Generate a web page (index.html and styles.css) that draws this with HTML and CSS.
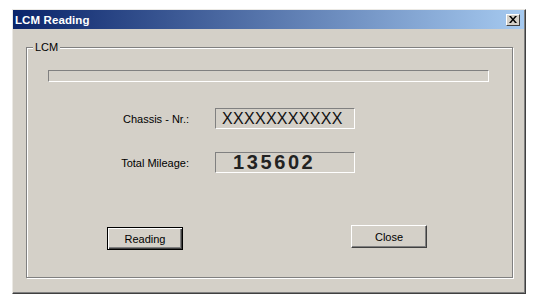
FILE: index.html
```html
<!DOCTYPE html>
<html>
<head>
<meta charset="utf-8">
<link rel="stylesheet" href="styles.css">
</head>
<body>
<div class="window">
  <div class="titlebar">
    <span class="title">LCM Reading</span>
    <span class="close-btn"><svg width="8" height="7" viewBox="0 0 8 7"><path d="M0 0h2l2 2.5 2-2.5h2l-3 3.5 3 3.5h-2l-2-2.5-2 2.5h-2l3-3.5z" fill="#000"/></svg></span>
  </div>
  <div class="content">
    <div class="groupbox">
      <span class="legend">LCM</span>
      <div class="progress"></div>
      <div class="row row-first">
        <span class="label">Chassis - Nr.:</span>
        <div class="field field-chassis">XXXXXXXXXXX</div>
      </div>
      <div class="row row-second">
        <span class="label">Total Mileage:</span>
        <div class="field field-mileage">135602</div>
      </div>
      <div class="buttons">
        <button class="btn btn-default">Reading</button>
        <button class="btn btn-close">Close</button>
      </div>
    </div>
  </div>
</div>
</body>
</html>
```
FILE: styles.css
```css
html, body {
  margin: 0;
  padding: 0;
  background: #ffffff;
}
body {
  padding: 9px 0 0 12px;
  font-family: "Liberation Sans", Arial, sans-serif;
  font-size: 11px;
  color: #000;
}
.window {
  width: 511px;
  height: 282px;
  background: #d4d0c8;
  border-left: 1px solid #ebe9e4;
  border-top: 1px solid #ebe9e4;
  border-right: 1px solid #404040;
  border-bottom: 1px solid #404040;
  padding: 0 1px 1px 0;
  box-shadow: inset -1px -1px 0 #808080;
  display: flex;
  flex-direction: column;
}
.titlebar {
  height: 19px;
  background: linear-gradient(to right, #0a246a, #a6caf0);
  display: flex;
  align-items: center;
  justify-content: space-between;
  padding: 0 4px 0 2px;
}
.title {
  color: #fff;
  font-weight: bold;
  font-size: 11.5px;
  letter-spacing: 0.1px;
}
.close-btn {
  width: 12px;
  height: 10px;
  background: #d4d0c8;
  border-left: 1px solid #fff;
  border-top: 1px solid #fff;
  border-right: 1px solid #404040;
  border-bottom: 1px solid #404040;
  display: flex;
  align-items: center;
  justify-content: center;
}
.content {
  flex: 1;
  padding: 18px 0 0 13px;
}
.groupbox {
  position: relative;
  border: 1px solid #808080;
  box-shadow: inset 1px 1px 0 #fff, 1px 1px 0 #fff;
  padding: 0 23px 0 21px;
  box-sizing: border-box;
  height: 231px;
  width: 487px;
}
.legend {
  position: absolute;
  top: -7px;
  left: 6px;
  padding: 0 2px;
  background: #d4d0c8;
  line-height: 13px;
}
.progress {
  margin-top: 22px;
  height: 10px;
  border-top: 1px solid #808080;
  border-left: 1px solid #808080;
  border-bottom: 1px solid #fff;
  border-right: 1px solid #fff;
}
.row {
  display: flex;
  align-items: center;
  gap: 26px;
}
.row-first {
  margin-top: 26px;
}
.row-second {
  margin-top: 23px;
}
.label {
  width: 141px;
  text-align: right;
}
.field {
  width: 138px;
  height: 19px;
  border-top: 1px solid #808080;
  border-left: 1px solid #808080;
  border-bottom: 1px solid #fff;
  border-right: 1px solid #fff;
  display: flex;
  align-items: center;
}
.field-chassis {
  font-size: 16px;
  letter-spacing: 0.3px;
  padding-left: 6px;
  width: 132px;
  color: #111;
}
.field-mileage {
  font-size: 20px;
  font-weight: bold;
  letter-spacing: 2.6px;
  padding-left: 17px;
  width: 121px;
  color: #222;
}
.buttons {
  display: flex;
  align-items: flex-start;
  margin-top: 52px;
  padding-left: 59px;
  gap: 168px;
}
.btn {
  font-family: "Liberation Sans", Arial, sans-serif;
  font-size: 11px;
  width: 76px;
  height: 23px;
  background: #d4d0c8;
  padding: 0;
  margin: 0;
  color: #000;
  border-left: 1px solid #fff;
  border-top: 1px solid #fff;
  border-right: 1px solid #404040;
  border-bottom: 1px solid #404040;
  box-shadow: inset -1px -1px 0 #808080;
}
.btn-default {
  margin-top: 2px;
  border: 1px solid #000;
  box-shadow: inset 1px 1px 0 #fff, inset -1px -1px 0 #404040, inset -2px -2px 0 #808080;
}
```
